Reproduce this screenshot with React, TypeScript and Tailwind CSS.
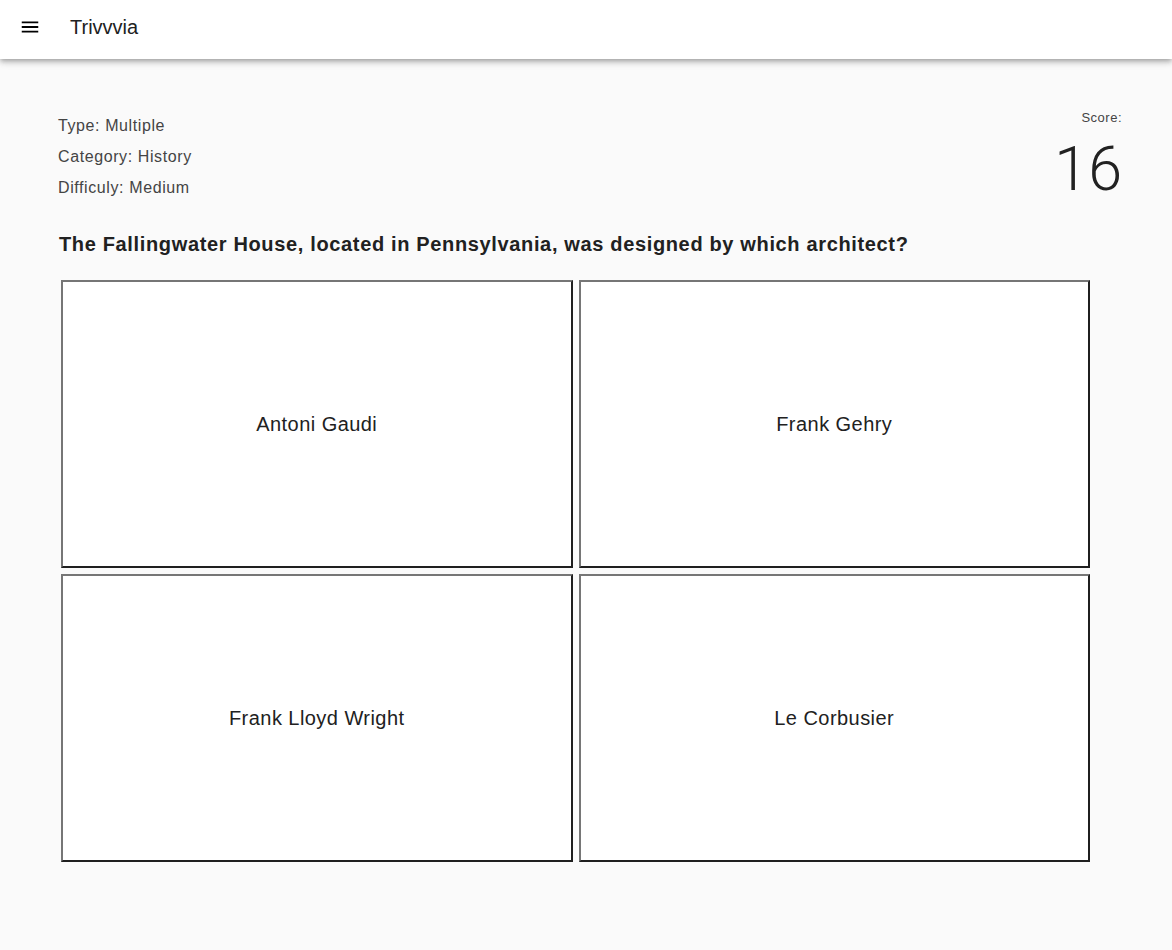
const ANSWERS = ['Antoni Gaudi', 'Frank Gehry', 'Frank Lloyd Wright', 'Le Corbusier']

export default function App() {
  return (
    <div className="min-h-[950px] bg-[#fafafa] font-['Liberation_Sans',Arial,sans-serif] text-[#212121]">
      <header className="flex h-[59px] items-center bg-white px-[19px] pb-[6px] shadow-[0_2px_4px_-1px_rgba(0,0,0,0.2),0_4px_5px_0_rgba(0,0,0,0.14),0_1px_10px_0_rgba(0,0,0,0.12)]">
        <svg width="22" height="22" viewBox="0 0 24 24" className="text-black">
          <path d="M3 18h18v-2H3v2zm0-5h18v-2H3v2zm0-7v2h18V6H3z" fill="currentColor" />
        </svg>
        <span className="ml-[29px] text-[20px] text-[#212121]">Trivvvia</span>
      </header>

      <main className="pl-[58px] pr-[50px] pt-[49px]">
        <div className="flex items-start justify-between">
          <div className="flex flex-col gap-[10px] pt-[7px] text-[16px] leading-[21px] tracking-[0.6px] text-[#444]">
            <span>Type: Multiple</span>
            <span>Category: History</span>
            <span>Difficuly: Medium</span>
          </div>
          <div className="flex flex-col items-end">
            <span className="text-[13px] leading-[20px] tracking-[0.5px] text-[#444]">Score:</span>
            <span className="mt-[11px] font-['Roboto',sans-serif] text-[61px] font-light leading-[61px]">16</span>
          </div>
        </div>

        <h2 className="mt-[29px] pl-px text-[20px] font-bold tracking-[0.65px]">
          The Fallingwater House, located in Pennsylvania, was designed by which architect?
        </h2>

        <div className="mt-[21px] grid w-[1032px] grid-cols-2 gap-[6px] pl-[3px]">
          {ANSWERS.map((a) => (
            <button
              key={a}
              className="flex h-[288px] items-center justify-center border-2 border-t-[#767676] border-l-[#767676] border-b-[#1f1f1f] border-r-[#1f1f1f] bg-white text-[20px] tracking-[0.45px] text-[#212121]"
            >
              {a}
            </button>
          ))}
        </div>
      </main>
    </div>
  )
}
